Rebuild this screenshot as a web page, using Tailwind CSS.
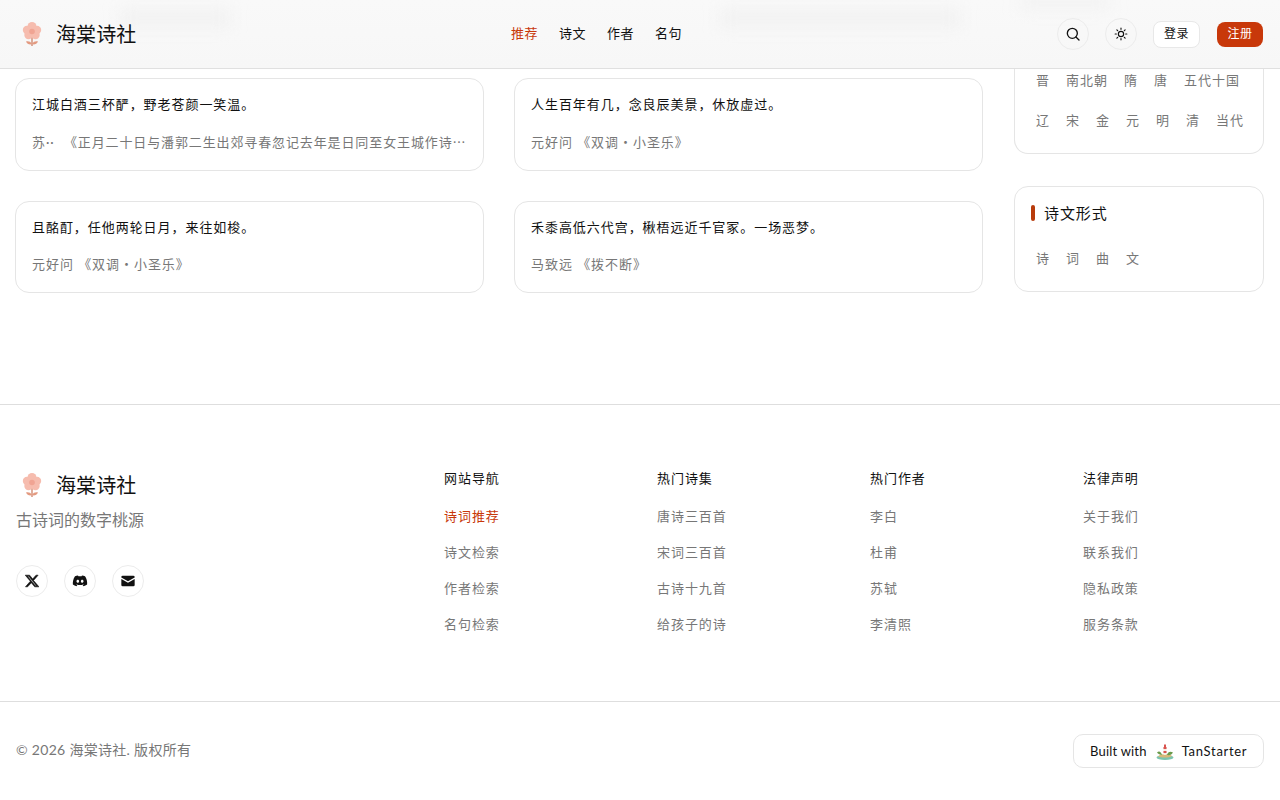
<!DOCTYPE html>
<html lang="zh"><head><meta charset="utf-8"><title>海棠诗社</title>
<script src="https://cdn.jsdelivr.net/npm/@tailwindcss/browser@4"></script></head>
<body class="bg-white text-[#111] font-['Lato','Noto_Sans_CJK_SC',sans-serif] [text-spacing-trim:space-all] h-[800px] overflow-hidden">
<header class="relative h-[69px] border-b border-[#e0e0e0] bg-gradient-to-b from-[#f9f9f9] to-[#f7f7f7] flex items-center justify-between pl-[16px] pr-[17px] overflow-hidden">
  <div class="absolute left-[120px] top-[10px] w-[110px] h-[16px] bg-[#f1f1f1] blur-[8px]"></div>
  <div class="absolute left-[720px] top-[10px] w-[240px] h-[16px] bg-[#f1f1f1] blur-[8px]"></div>
  <div class="absolute left-[1020px] top-[-4px] w-[90px] h-[12px] bg-[#f1f1f1] blur-[8px]"></div>
  <div class="relative flex items-center gap-[8px]">
    <svg class="w-[32px] h-[32px]" viewBox="0 0 32 32"><path d="M16 19v9" fill="none" stroke="#c9785c" stroke-width="1.200"/><path d="M16 26c-1.500-2.500-3.500-3-6-2.500 1 2.500 4 3.500 6 2.500zM16 26c1.500-2.500 3.500-3 6-2.500-1 2.500-4 3.500-6 2.500z" fill="#e39a80"/><g fill="#f6bcae"><circle cx="16" cy="8.500" r="4.500"/><circle cx="11" cy="12" r="4.200"/><circle cx="21" cy="12" r="4.200"/><circle cx="12.500" cy="17" r="4.200"/><circle cx="19.500" cy="17" r="4.200"/></g><circle cx="16" cy="13.500" r="2.800" fill="#f0a493"/></svg>
    <span class="text-[20px] tracking-[0.1px] leading-none">海棠诗社</span>
  </div>
  <nav class="absolute left-[511px] top-[24px] flex gap-[21px] text-[13px] leading-[18px] tracking-[0.5px]">
    <a class="text-[#c8380a]">推荐</a><a>诗文</a><a>作者</a><a>名句</a>
  </nav>
  <div class="relative flex items-center">
    <button class="w-[32px] h-[32px] rounded-full border border-[#ececec] flex items-center justify-center mr-[16px]"><svg class="w-[16px] h-[16px]" viewBox="0 0 24 24" fill="none" stroke="#111" stroke-width="2" stroke-linecap="round"><circle cx="11" cy="11" r="7.500"/><path d="m21 21-4.500-4.500"/></svg></button>
    <button class="w-[32px] h-[32px] rounded-full border border-[#ececec] flex items-center justify-center mr-[16px]"><svg class="w-[14px] h-[14px]" viewBox="0 0 24 24" fill="none" stroke="#111" stroke-width="2" stroke-linecap="round"><circle cx="12" cy="12" r="4.500"/><path d="M12 2v2M12 20v2M4.900 4.900l1.400 1.400M17.700 17.700l1.400 1.400M2 12h2M20 12h2M4.900 19.100l1.400-1.400M17.700 6.300l1.400-1.400"/></svg></button>
    <button class="w-[47px] h-[27px] rounded-[8px] border border-[#e8e8e8] bg-white text-[12px] tracking-[0.5px] mr-[17px]">登录</button>
    <button class="w-[46px] h-[25px] rounded-[8px] bg-[#c8380a] text-white text-[12px] tracking-[0.5px]">注册</button>
  </div>
</header>

<main class="h-[335px] flex pl-[15px] pr-[16px]">
  <div class="w-[968px] shrink-0 grid grid-cols-2 gap-x-[30px] auto-rows-min pt-[9px] gap-y-[30px]">
    <article class="h-[93px] border border-[#e5e5e5] rounded-[14px] px-[16px] pt-[15px]">
      <p class="text-[13px] leading-[20px] tracking-[0.95px]">江城白酒三杯酽，野老苍颜一笑温。</p>
      <p class="mt-[18px] text-[13px] leading-[20px] tracking-[0.95px] text-[#777] whitespace-nowrap">苏·· <span class="ml-[5px] tracking-[0.88px]">《正月二十日与潘郭二生出郊寻春忽记去年是日同至女王城作诗⋯</span></p>
    </article>
    <article class="h-[93px] border border-[#e5e5e5] rounded-[14px] px-[16px] pt-[15px]">
      <p class="text-[13px] leading-[20px] tracking-[0.95px]">人生百年有几，念良辰美景，休放虚过。</p>
      <p class="mt-[18px] text-[13px] leading-[20px] tracking-[0.95px] text-[#777]">元好问 《双调・小圣乐》</p>
    </article>
    <article class="h-[92px] border border-[#e5e5e5] rounded-[14px] px-[16px] pt-[15px]">
      <p class="text-[13px] leading-[20px] tracking-[0.95px]">且酩酊，任他两轮日月，来往如梭。</p>
      <p class="mt-[17px] text-[13px] leading-[20px] tracking-[0.95px] text-[#777]">元好问 《双调・小圣乐》</p>
    </article>
    <article class="h-[92px] border border-[#e5e5e5] rounded-[14px] px-[16px] pt-[15px]">
      <p class="text-[13px] leading-[20px] tracking-[0.95px]">禾黍高低六代宫，楸梧远近千官冢。一场恶梦。</p>
      <p class="mt-[17px] text-[13px] leading-[20px] tracking-[0.95px] text-[#777]">马致远 《拨不断》</p>
    </article>
  </div>
  <aside class="w-[250px] ml-[31px]">
    <div class="h-[85px] border border-t-0 border-[#e5e5e5] rounded-b-[14px] pl-[21px] text-[13px] tracking-[1px] text-[#777] whitespace-nowrap">
      <div class="flex gap-[16px] h-[24px] items-center"><span>晋</span><span>南北朝</span><span>隋</span><span>唐</span><span>五代十国</span></div>
      <div class="flex gap-[16px] h-[24px] mt-[16px] items-center"><span>辽</span><span>宋</span><span>金</span><span>元</span><span>明</span><span>清</span><span>当代</span></div>
    </div>
    <div class="mt-[32px] h-[106px] border border-[#e5e5e5] rounded-[14px] pl-[16px]">
      <h3 class="flex items-center gap-[9px] mt-[16px] text-[15px] leading-[20px] tracking-[0.9px]"><span class="w-[4px] h-[16px] rounded-full bg-[#b83c0c]"></span><span>诗文形式</span></h3>
      <div class="flex gap-[16px] mt-[25px] pl-[5px] text-[13px] leading-[20px] tracking-[1px] text-[#777]"><span>诗</span><span>词</span><span>曲</span><span>文</span></div>
    </div>
  </aside>
</main>

<footer class="border-t border-[#dedede]">
  <div class="h-[297px] border-b border-[#dedede] flex pl-[16px]">
    <div class="w-[428px] shrink-0 pt-[64px]">
      <div class="flex items-center gap-[8px]">
        <svg class="w-[32px] h-[32px]" viewBox="0 0 32 32"><path d="M16 19v9" fill="none" stroke="#c9785c" stroke-width="1.200"/><path d="M16 26c-1.500-2.500-3.500-3-6-2.500 1 2.500 4 3.500 6 2.500zM16 26c1.500-2.500 3.500-3 6-2.500-1 2.500-4 3.500-6 2.500z" fill="#e39a80"/><g fill="#f6bcae"><circle cx="16" cy="8.500" r="4.500"/><circle cx="11" cy="12" r="4.200"/><circle cx="21" cy="12" r="4.200"/><circle cx="12.500" cy="17" r="4.200"/><circle cx="19.500" cy="17" r="4.200"/></g><circle cx="16" cy="13.500" r="2.800" fill="#f0a493"/></svg>
        <span class="text-[20px] tracking-[0.1px] leading-none">海棠诗社</span>
      </div>
      <p class="mt-[7px] text-[16px] leading-[24px] text-[#777]">古诗词的数字桃源</p>
      <div class="mt-[33px] flex gap-[16px]">
        <span class="w-[32px] h-[32px] rounded-full border border-[#ececec] flex items-center justify-center"><svg class="w-[14px] h-[14px]" viewBox="0 0 24 24" fill="#111"><path d="M18.900 2h3.600l-7.900 9 9.300 11h-7.300l-5.700-7-6.500 7H.8l8.400-9.600L.4 2h7.500l5.200 6.500zM17.700 20h2L6.500 3.900H4.300z" stroke="#111"/></svg></span>
        <span class="w-[32px] h-[32px] rounded-full border border-[#ececec] flex items-center justify-center"><svg class="w-[16px] h-[16px]" viewBox="0 0 24 24" fill="#111"><path d="M19.500 5A17 17 0 0 0 15 3.700l-.6 1.200a16 16 0 0 0-4.800 0L9 3.700A17 17 0 0 0 4.500 5C1.700 9.200 1 13.300 1.300 17.300A17 17 0 0 0 6.800 20l1.200-1.900-1.900-1 .5-.4a12 12 0 0 0 10.800 0l.5.400-1.900 1 1.200 1.900a17 17 0 0 0 5.500-2.700c.4-4.600-.8-8.700-3.200-12.300zM8.700 14.800c-1.100 0-2-1-2-2.300s.9-2.300 2-2.300 2 1 2 2.300-.9 2.300-2 2.300zm6.600 0c-1.100 0-2-1-2-2.300s.9-2.300 2-2.300 2 1 2 2.300-.9 2.300-2 2.300z"/></svg></span>
        <span class="w-[32px] h-[32px] rounded-full border border-[#ececec] flex items-center justify-center"><svg class="w-[16px] h-[16px]" viewBox="0 0 24 24" fill="#111"><path d="M4 4h16a2 2 0 0 1 2 2v.7l-10 5.800L2 6.700V6a2 2 0 0 1 2-2zM2 9v9a2 2 0 0 0 2 2h16a2 2 0 0 0 2-2V9l-10 5.800z"/></svg></span>
      </div>
    </div>
    <div class="grid grid-cols-[213px_213px_213px_197px] w-[836px] shrink-0 pt-[63px] text-[13px] tracking-[0.95px]">
      <div><h4 class="leading-[20px] mb-[18px]">网站导航</h4><ul class="flex flex-col gap-[16px] leading-[20px] text-[#777]"><li class="text-[#c8380a]">诗词推荐</li><li>诗文检索</li><li>作者检索</li><li>名句检索</li></ul></div>
      <div><h4 class="leading-[20px] mb-[18px]">热门诗集</h4><ul class="flex flex-col gap-[16px] leading-[20px] text-[#777]"><li>唐诗三百首</li><li>宋词三百首</li><li>古诗十九首</li><li>给孩子的诗</li></ul></div>
      <div><h4 class="leading-[20px] mb-[18px]">热门作者</h4><ul class="flex flex-col gap-[16px] leading-[20px] text-[#777]"><li>李白</li><li>杜甫</li><li>苏轼</li><li>李清照</li></ul></div>
      <div><h4 class="leading-[20px] mb-[18px]">法律声明</h4><ul class="flex flex-col gap-[16px] leading-[20px] text-[#777]"><li>关于我们</li><li>联系我们</li><li>隐私政策</li><li>服务条款</li></ul></div>
    </div>
  </div>
  <div class="h-[98px] flex items-center justify-between pl-[16px] pr-[16px]">
    <p class="text-[14px] tracking-[0.3px] text-[#777] mb-[3px]">© 2026 海棠诗社. 版权所有</p>
    <div class="h-[34px] w-[191px] border border-[#e5e5e5] rounded-[10px] flex items-center pl-[16px] pt-[2px] text-[13px]">
      <span class="tracking-[0.2px]">Built with</span>
      <svg class="w-[18px] h-[18px] ml-[9px] mr-[8px]" viewBox="0 0 18 18"><ellipse cx="9" cy="14.500" rx="8.500" ry="2.500" fill="#7cc4ae"/><path d="M2 13.500c2-3 10-3.500 14-.5-3 2-10 2-14 .5z" fill="#d8b878"/><path d="M7.500 12V4h3v8z" fill="#f3ece0"/><path d="M7.500 4h3v2h-3zM7.500 8h3v2h-3zM8 1.500h2V4H8z" fill="#d9534f"/><path d="M1 9.500c2-2 4-1 5 2.500-2 0-4-1-5-2.500zM11 12c1-3 3-4 6-2.500-1 2-3 3-6 2.500z" fill="#6a9a4a"/></svg>
      <span class="tracking-[0.7px]">TanStarter</span>
    </div>
  </div>
</footer>
</body></html>
